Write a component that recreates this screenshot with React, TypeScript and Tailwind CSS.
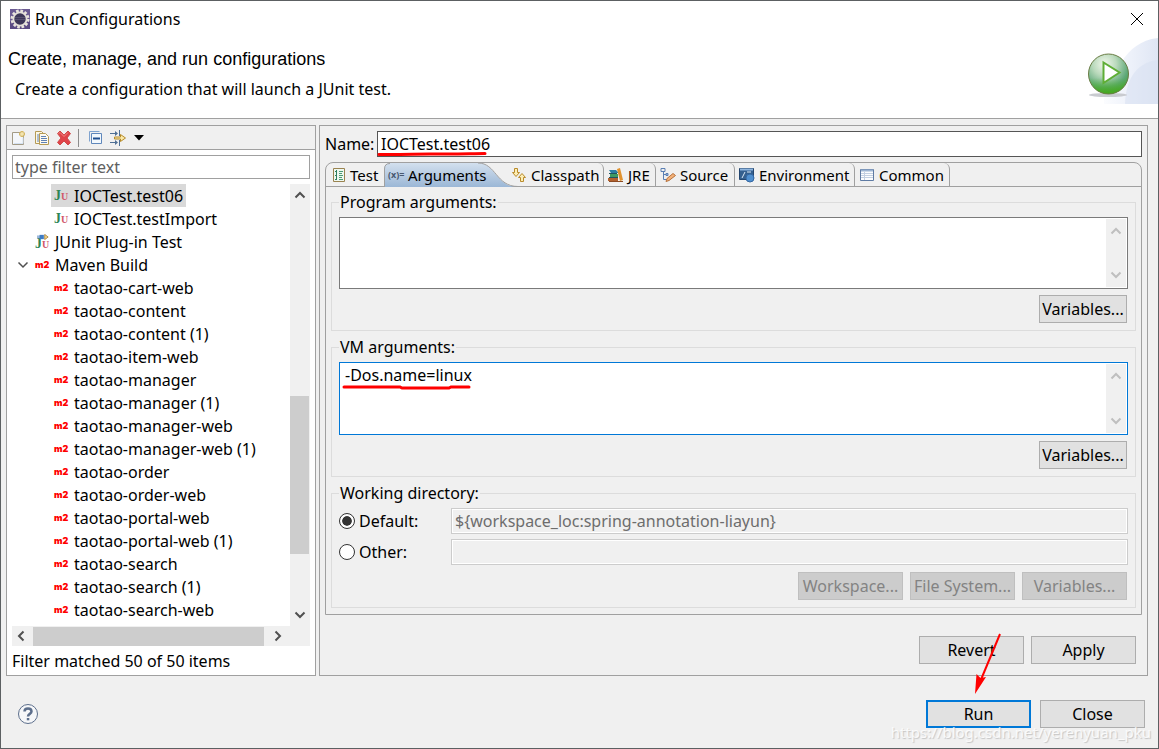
import { useState } from "react";
import type { ReactNode } from "react";

type TreeItem = {
  label: string;
  kind: "junit" | "plugin" | "maven";
  level: 1 | 2;
  expanded?: boolean;
};

const treeItems: TreeItem[] = [
  { label: "IOCTest.test06", kind: "junit", level: 2 },
  { label: "IOCTest.testImport", kind: "junit", level: 2 },
  { label: "JUnit Plug-in Test", kind: "plugin", level: 1 },
  { label: "Maven Build", kind: "maven", level: 1, expanded: true },
  { label: "taotao-cart-web", kind: "maven", level: 2 },
  { label: "taotao-content", kind: "maven", level: 2 },
  { label: "taotao-content (1)", kind: "maven", level: 2 },
  { label: "taotao-item-web", kind: "maven", level: 2 },
  { label: "taotao-manager", kind: "maven", level: 2 },
  { label: "taotao-manager (1)", kind: "maven", level: 2 },
  { label: "taotao-manager-web", kind: "maven", level: 2 },
  { label: "taotao-manager-web (1)", kind: "maven", level: 2 },
  { label: "taotao-order", kind: "maven", level: 2 },
  { label: "taotao-order-web", kind: "maven", level: 2 },
  { label: "taotao-portal-web", kind: "maven", level: 2 },
  { label: "taotao-portal-web (1)", kind: "maven", level: 2 },
  { label: "taotao-search", kind: "maven", level: 2 },
  { label: "taotao-search (1)", kind: "maven", level: 2 },
  { label: "taotao-search-web", kind: "maven", level: 2 },
];

const buttonBaseClassName = "h-7 shrink-0 bg-[#e1e1e1] text-center whitespace-nowrap";

const buttonClassName = `${buttonBaseClassName} border border-[#adadad] disabled:border-[#bfbfbf] disabled:bg-[#cccccc] disabled:text-[#838383]`;

const fieldsetClassName = "min-w-0 border border-[#dcdcdc] px-[7px] pt-1 pb-[7px]";

const Chevron = ({ direction, className = "" }: { direction: "up" | "down" | "left" | "right"; className?: string }) => {
  const paths = {
    up: "M1.5 8.5 6 4l4.500 4.500",
    down: "M1.500 3.500 6 8l4.500-4.500",
    left: "M8.500 1.500 4 6l4.500 4.500",
    right: "M3.500 1.500 8 6l-4.500 4.500",
  };
  return (
    <svg viewBox="0 0 12 12" className={`h-3 w-3 ${className}`} fill="none" stroke="currentColor" strokeWidth="2">
      <path d={paths[direction]} />
    </svg>
  );
};

const EclipseIcon = () => (
  <svg viewBox="0 0 20 20" className="h-5 w-5">
    <rect width="20" height="20" fill="#6b5a92" />
    <rect y="12" width="20" height="8" fill="#5b4a83" />
    <circle cx="10" cy="10" r="8" fill="none" stroke="#e9e4dd" strokeWidth="3" strokeDasharray="2.6 1.600" />
    <circle cx="10" cy="10" r="6.600" fill="#3d3658" stroke="#e4dfd8" strokeWidth="1.800" />
    <path d="M5 8.500h10M5 10.500h10" stroke="#57506f" />
  </svg>
);

const BannerArt = () => (
  <svg viewBox="0 0 74 68" className="h-[68px] w-[74px]">
    <defs>
      <linearGradient id="banner-wave" x1="0" x2="1">
        <stop offset="0" stopColor="#fbfcfe" />
        <stop offset="0.500" stopColor="#edf1fa" />
        <stop offset="1" stopColor="#dfe6f4" />
      </linearGradient>
      <radialGradient id="run-ball" cx="0.400" cy="0.250" r="0.850">
        <stop offset="0" stopColor="#f2f7ec" />
        <stop offset="0.350" stopColor="#b9d9bb" />
        <stop offset="0.700" stopColor="#5fa97a" />
        <stop offset="1" stopColor="#3a9a2d" />
      </radialGradient>
      <linearGradient id="run-glow" x1="0" x2="0" y1="0" y2="1">
        <stop offset="0.600" stopColor="#4fb32a" stopOpacity="0" />
        <stop offset="1" stopColor="#45a81c" />
      </linearGradient>
    </defs>
    <path d="M20 67V48C34 40 38 5 74 1v66z" fill="url(#banner-wave)" />
    <path d="M41 67C42 40 54 25 74 23v44z" fill="#d9e1f2" opacity="0.600" />
    <ellipse cx="24" cy="58" rx="19" ry="2" fill="#c9cbd0" />
    <circle cx="24.500" cy="37" r="20" fill="url(#run-ball)" />
    <circle cx="24.500" cy="37" r="20" fill="url(#run-glow)" stroke="#6b7d45" />
    <path d="M19.500 25.500v20.500l16-10.500z" fill="#fff" stroke="#5fae36" strokeWidth="2" />
  </svg>
);

const JunitIcon = () => (
  <span className="flex w-[14px] shrink-0 items-baseline font-['Liberation_Serif',serif] leading-none font-bold">
    <span className="text-[14px] text-[#2e8555]">J</span>
    <span className="text-[10px] text-[#d0566a]">U</span>
  </span>
);

const PluginIcon = () => (
  <span className="relative flex h-4 w-[14px] shrink-0 items-baseline pt-[3px] font-['Liberation_Serif',serif] leading-none font-bold">
    <svg viewBox="0 0 14 7" className="absolute top-0 left-[2px] h-[6px] w-3">
      <path d="M0 2.500h4M0 4.500h4" stroke="#4b7fc0" />
      <path d="M3 1h5v5H3z" fill="#3f7cc4" />
      <path d="M9 0.500 13 3.500 9 6.500z" fill="#f3d98b" stroke="#a8823a" />
    </svg>
    <span className="text-[14px] text-[#2e8555]">J</span>
    <span className="text-[10px] text-[#d0566a]">U</span>
  </span>
);

const MavenIcon = () => (
  <span className="w-[14px] shrink-0 font-['Inter',sans-serif] text-[9px] leading-none font-black text-[#ff0000]">
    m2
  </span>
);

const kindIcons: Record<TreeItem["kind"], ReactNode> = {
  junit: <JunitIcon />,
  plugin: <PluginIcon />,
  maven: <MavenIcon />,
};

const NewIcon = () => (
  <svg viewBox="0 0 16 16" className="h-4 w-4" fill="none">
    <path d="M1.500 2.500h8l3 3v9h-11z" fill="#f4f7fb" stroke="#a39b86" />
    <path d="M3 13.500h9v-6" stroke="#d5e2f2" />
    <path d="M11 1v6M8 4h6" stroke="#d5b867" strokeWidth="3" />
    <path d="M11 2v4M9 4h4" stroke="#fdf3c8" />
  </svg>
);

const DuplicateIcon = () => (
  <svg viewBox="0 0 16 16" className="h-4 w-4" fill="none">
    <path d="M1.500 1.500h6l2 2v10h-8z" fill="#fdf8e4" stroke="#b59a55" />
    <path d="M3 5h3M3 7h3M3 9h3M3 11h3" stroke="#5f82b5" />
    <path d="M5.500 3.500h6l3 3v8h-9z" fill="#fdfaf0" stroke="#b59a55" />
    <path d="M7 6.500h5M7 8.500h6M7 10.500h6M7 12.500h6" stroke="#5f82b5" />
  </svg>
);

const DeleteIcon = () => (
  <svg viewBox="0 0 16 16" className="h-4 w-4">
    <path
      d="M1.500 3.500 4 1l4 4 4-4 2.500 2.500L11 8l3.500 4.500L12 15l-4-4-4 4-2.500-2.500L5 8z"
      fill="#e0444a"
      stroke="#cf4a4a"
      strokeLinejoin="round"
    />
    <path d="M2.500 3.500 4 2.500l4 4 4-4" fill="none" stroke="#f08a86" />
  </svg>
);

const CollapseIcon = () => (
  <svg viewBox="0 0 16 16" className="h-4 w-4" fill="none">
    <path d="M1.500 11.500v-10h10" stroke="#7fa3cf" />
    <path d="M3.500 3.500h10v10h-10z" fill="#f2f8fd" stroke="#5f87bb" />
    <path d="M5 8.500h7" stroke="#1f4f8f" strokeWidth="2" />
  </svg>
);

const FilterIcon = () => (
  <svg viewBox="0 0 18 16" className="h-4 w-[18px]" fill="none">
    <path d="M0 3.500h7M0 12.500h7M9.500 0v6M9.500 10v6" stroke="#4f6f95" />
    <path d="M5 1v5l3-2.500zM5 10v5l3-2.500z" fill="#4f6f95" />
    <path d="M4.500 7h6V4.500L15.500 8l-5 3.500V9h-6z" fill="#fbe9a8" stroke="#b58a2a" />
  </svg>
);

const TestIcon = () => (
  <svg viewBox="0 0 14 16" className="h-4 w-[14px]" fill="none">
    <path d="M1.500 1.500h11v13h-11z" fill="#eef8f0" stroke="#9a8350" />
    <path d="M4.500 3v10M3 4.500h2M3 8.500h2M3 12.500h2" stroke="#2f7f5f" />
    <path d="M7 4.500h4M7 6.500h3M7 8.500h4M7 10.500h3M7 12.500h4" stroke="#4a9a74" />
  </svg>
);

const ArgumentsIcon = () => (
  <span className="block w-4 text-[9px] leading-none font-bold whitespace-nowrap text-[#47586f]">(x)=</span>
);

const ClasspathIcon = () => (
  <svg viewBox="0 0 16 16" className="h-4 w-4" fill="#fdeeb5" stroke="#b98b2c">
    <path d="M3.500 1.500h3v4h2l-3.500 4-3.500-4h2z" />
    <path d="m11 6.500 3.500 4h-2v4h-3v-4h-2z" />
  </svg>
);

const JreIcon = () => (
  <svg viewBox="0 0 16 16" className="h-4 w-4">
    <path d="M1 3h7l2 2v1H3z" fill="#2e7fa5" />
    <path d="M2 7h8v3H2z" fill="#3f9a63" />
    <path d="M0 11h10v3H0z" fill="#b2622f" />
    <path d="M1 6.500h8M1 10.500h9" stroke="#1f5560" />
    <path d="m9 2 3-1 3 12-3 1z" fill="#e0922e" />
    <path d="M1 14.500h14" stroke="#8c4a22" />
  </svg>
);

const SourceIcon = () => (
  <svg viewBox="0 0 16 16" className="h-4 w-4" fill="none">
    <path d="M1 1.500h4v3H1zM3.500 5v7.500H7M3.500 7.500H6" stroke="#5b7fb3" />
    <path d="M6 6.500h2v2H6z" fill="#9fb8da" stroke="#5b7fb3" />
    <path d="m6 14.500 1-3 6-5 2.500 2-6.500 5z" fill="#f3b27a" stroke="#b8713a" />
  </svg>
);

const EnvironmentIcon = () => (
  <svg viewBox="0 0 16 16" className="h-4 w-4">
    <path d="M0.500 1.500h14v11H0.500z" fill="#35608f" stroke="#24466f" />
    <path d="M1 2.500h13" stroke="#8fb5de" strokeWidth="2" />
    <path d="m3 11 3-6M8 5h4" stroke="#dce9f6" />
    <circle cx="11" cy="11" r="4" fill="#4f8fcf" stroke="#3467a2" />
  </svg>
);

const CommonIcon = () => (
  <svg viewBox="0 0 16 16" className="h-4 w-4" fill="none">
    <path d="M1.500 2.500h13v11h-13z" fill="#fbfdff" stroke="#5f7ba3" />
    <path d="M2 3.500h12" stroke="#9db5d3" strokeWidth="2" />
    <path d="M5.500 5v8M2 6.500h12M2 8.500h12M2 10.500h12" stroke="#c3d0e2" />
  </svg>
);

const HelpIcon = () => (
  <svg viewBox="0 0 22 22" className="h-[22px] w-[22px]" fill="none">
    <circle cx="11" cy="11" r="9.500" fill="#f6f7f9" stroke="#5d6f8c" />
    <path d="M7.500 8.500c0-4 7-4 7 0 0 2.500-3.500 2.300-3.500 5" stroke="#5d6f8c" strokeWidth="2.500" />
    <path d="M9.800 15h2.500v2.300H9.800z" fill="#5d6f8c" />
  </svg>
);

const tabs = [
  { label: "Test", icon: <TestIcon />, className: "w-[58px] pl-1.5 gap-1" },
  { label: "Arguments", icon: <ArgumentsIcon />, className: "w-[122px] pl-1 gap-1" },
  { label: "Classpath", icon: <ClasspathIcon />, className: "w-[98px] border-r pl-[5px] gap-1 rounded-tr-md" },
  { label: "JRE", icon: <JreIcon />, className: "w-[52px] border-r pl-1 gap-1 rounded-tr-md" },
  { label: "Source", icon: <SourceIcon />, className: "w-[79px] border-r pl-1 gap-1 rounded-tr-md" },
  { label: "Environment", icon: <EnvironmentIcon />, className: "w-[120px] border-r pl-1 gap-1 rounded-tr-md" },
  { label: "Common", icon: <CommonIcon />, className: "w-[95px] border-r pl-1 gap-1 rounded-tr-md" },
];

const ActiveTabShape = () => (
  <svg viewBox="0 0 134 24" className="absolute top-0 left-0 h-6 w-[134px]">
    <defs>
      <linearGradient id="active-tab" x1="0" x2="0" y1="0" y2="1">
        <stop offset="0" stopColor="#d3e0ee" />
        <stop offset="1" stopColor="#9bb7d6" />
      </linearGradient>
    </defs>
    <path d="M0 24V6Q0 0 6 0H94C112 0 112 24 134 24z" fill="url(#active-tab)" />
    <path d="M0.500 24V6Q0.500 0.500 6 0.500M94 0C112 0 112 23.500 134 23.500" fill="none" stroke="#a0a0a0" />
  </svg>
);

const ArgumentsBox = ({
  title,
  defaultValue,
  focused = false,
  children,
}: {
  title: string;
  defaultValue?: string;
  focused?: boolean;
  children?: ReactNode;
}) => (
  <fieldset className={fieldsetClassName}>
    <legend className="px-px leading-[22px]">{title}</legend>
    <div
      className={`relative flex border border-solid bg-white p-px ${focused ? "h-[73px] border-[#0078d7]" : "h-[72px] border-[#7a7a7a]"}`}
    >
      <textarea
        aria-label={title}
        defaultValue={defaultValue}
        spellCheck={false}
        className="min-w-0 flex-1 resize-none overflow-hidden px-1 leading-[22px] outline-none"
      />
      <div className="flex w-5 flex-col items-center justify-between bg-[#f0f0f0] py-[6px] text-[#bfbfbf]">
        <Chevron direction="up" />
        <Chevron direction="down" />
      </div>
      {children}
    </div>
    <div className="mt-[6px] flex justify-end pr-px">
      <button type="button" className={`${buttonClassName} w-[88px]`}>
        Variables...
      </button>
    </div>
  </fieldset>
);

const ConfigurationTree = () => {
  const [selected, setSelected] = useState("IOCTest.test06");

  return (
    <section className="flex w-[310px] shrink-0 flex-col border border-[#a0a0a0] bg-white">
      <div className="flex h-6 items-center border-b border-[#a0a0a0] bg-[#f0f0f0] pl-1">
        <button type="button" aria-label="New launch configuration" className="mr-[7px]">
          <NewIcon />
        </button>
        <button type="button" aria-label="Duplicate" className="mr-[6px]">
          <DuplicateIcon />
        </button>
        <button type="button" aria-label="Delete" className="mr-[6px]">
          <DeleteIcon />
        </button>
        <span className="mr-[9px] h-[18px] w-px bg-[#8c8c8c]" />
        <button type="button" aria-label="Collapse all" className="mr-[6px]">
          <CollapseIcon />
        </button>
        <button type="button" aria-label="Filter" className="mr-[6px]">
          <FilterIcon />
        </button>
        <button type="button" aria-label="Filter menu">
          <svg viewBox="0 0 10 6" className="h-[6px] w-[10px]">
            <path d="M0 0h10L5 5.500z" />
          </svg>
        </button>
      </div>

      <div className="flex flex-1 flex-col px-[5px] pt-[5px]">
        <input
          type="text"
          aria-label="Filter"
          placeholder="type filter text"
          className="h-6 w-full border border-[#a0a0a0] px-[2px] outline-none placeholder:text-[#606060] placeholder:opacity-100"
        />
        <div className="mt-[5px] flex h-[442px]">
          <ul className="min-w-0 flex-1 overflow-hidden">
            {treeItems.map(item => (
              <li key={item.label} className={`flex h-[23px] items-center ${item.level === 1 ? "pl-[5px]" : "pl-[39px]"}`}>
                {item.level === 1 ? (
                  <span className="mr-[3px] flex w-3 justify-center text-[#505050]">
                    {item.expanded ? <Chevron direction="down" className="stroke-[1.500px]" /> : null}
                  </span>
                ) : null}
                <button
                  type="button"
                  onClick={() => setSelected(item.label)}
                  className={`flex h-[23px] items-center gap-[6px] px-[3px] whitespace-nowrap ${selected === item.label ? "bg-[#d9d9d9]" : ""}`}
                >
                  {kindIcons[item.kind]}
                  <span>{item.label}</span>
                </button>
              </li>
            ))}
          </ul>
          <div className="flex w-5 flex-col items-center bg-[#f0f0f0] py-[5px] text-[#505050]">
            <Chevron direction="up" />
            <span className="mt-[195px] h-[158px] w-[19px] self-start bg-[#cdcdcd]" />
            <Chevron direction="down" className="mt-auto" />
          </div>
        </div>
        <div className="flex h-5 items-center bg-[#f0f0f0] pr-[26px] pl-[3px] text-[#505050]">
          <Chevron direction="left" />
          <span className="ml-[6px] h-[19px] w-[231px] bg-[#cdcdcd]" />
          <Chevron direction="right" className="ml-2" />
        </div>
        <p className="mt-1 leading-[23px]">Filter matched 50 of 50 items</p>
      </div>
    </section>
  );
};

const ConfigurationEditor = () => (
  <section className="flex min-w-0 flex-1 flex-col border border-[#a0a0a0] p-[5px] pb-[11px]">
    <div className="flex items-center">
      <label htmlFor="config-name" className="w-[52px] shrink-0">
        Name:
      </label>
      <div className="relative min-w-0 flex-1">
        <input
          id="config-name"
          type="text"
          defaultValue="IOCTest.test06"
          spellCheck={false}
          className="block h-[26px] w-full border border-[#555555] bg-white px-[3px] outline-none"
        />
        <svg viewBox="0 0 112 6" className="absolute top-[20px] left-0 h-[6px] w-28" fill="none">
          <path d="M2 3.500C30 4 40 2.500 60 3S95 2.500 108 2.500" stroke="#f00" strokeWidth="3" strokeLinecap="round" />
        </svg>
      </div>
    </div>

    <div className="mt-[5px] flex flex-1 flex-col rounded-t-lg border border-[#a0a0a0]">
      <div role="tablist" className="flex h-6 border-b border-[#a0a0a0] text-[15px]">
        {tabs.map(tab => {
          const active = tab.label === "Arguments";
          return (
            <button
              key={tab.label}
              type="button"
              role="tab"
              aria-selected={active}
              className={`relative flex shrink-0 items-center border-[#a0a0a0] whitespace-nowrap ${tab.className}`}
            >
              {active ? <ActiveTabShape /> : null}
              <span className="relative shrink-0">{tab.icon}</span>
              <span className="relative">{tab.label}</span>
            </button>
          );
        })}
      </div>

      <div className="flex flex-col gap-[5px] px-[5px] pt-1 pb-[6px]">
        <ArgumentsBox title="Program arguments:" />
        <ArgumentsBox title="VM arguments:" defaultValue="-Dos.name=linux" focused>
          <svg viewBox="0 0 130 8" className="absolute top-[20px] left-px h-2 w-[130px]" fill="none">
            <path d="M3 4h56l2 1h47l2-1h18" stroke="#f00" strokeWidth="3" strokeLinecap="round" />
          </svg>
        </ArgumentsBox>

        <fieldset className={fieldsetClassName}>
          <legend className="px-px leading-[22px]">Working directory:</legend>
          <div className="grid grid-cols-[112px_1fr] items-center gap-y-[5px]">
            <label className="flex items-center gap-1">
              <input
                type="radio"
                name="working-directory"
                defaultChecked
                className="h-4 w-4 appearance-none rounded-full border border-[#333333] bg-white bg-clip-content p-[2px] checked:bg-[#333333] checked:shadow-[inset_0_0_0_2px_white]"
              />
              Default:
            </label>
            <input
              type="text"
              aria-label="Default working directory"
              defaultValue="${workspace_loc:spring-annotation-liayun}"
              disabled
              className="h-[26px] min-w-0 border border-[#cccccc] bg-[#f0f0f0] px-[3px] text-[#6d6d6d] shadow-[inset_0_0_0_1px_white]"
            />
            <label className="flex items-center gap-1">
              <input
                type="radio"
                name="working-directory"
                className="h-4 w-4 appearance-none rounded-full border border-[#333333] bg-white"
              />
              Other:
            </label>
            <input
              type="text"
              aria-label="Other working directory"
              disabled
              className="h-[26px] min-w-0 border border-[#cccccc] bg-[#f0f0f0] px-[3px] shadow-[inset_0_0_0_1px_white]"
            />
          </div>
          <div className="mt-[7px] flex justify-end gap-[7px] pr-px">
            {["Workspace...", "File System...", "Variables..."].map(label => (
              <button key={label} type="button" disabled className={`${buttonClassName} w-[105px]`}>
                {label}
              </button>
            ))}
          </div>
        </fieldset>
      </div>
    </div>

    <div className="mt-[21px] flex justify-end gap-[7px] pr-[6px]">
      <button type="button" className={`${buttonClassName} w-[105px]`}>
        Revert
      </button>
      <button type="button" className={`${buttonClassName} w-[105px]`}>
        Apply
      </button>
    </div>
  </section>
);

export default function App() {
  return (
    <div className="relative flex min-h-screen flex-col overflow-hidden border border-[#5c6062] bg-[#f0f0f0] font-['Noto_Sans',sans-serif] text-[16px] leading-[22px] text-black">
      <header className="flex justify-between border-b border-[#a0a0a0] bg-white">
        <div className="pb-[18px]">
          <div className="flex h-9 items-center gap-[5px] pl-[9px]">
            <EclipseIcon />
            <span>Run Configurations</span>
          </div>
          <h1 className="mt-[11px] pl-[7px] font-['Liberation_Sans',sans-serif] text-[18px]">
            Create, manage, and run configurations
          </h1>
          <p className="mt-2 pl-[14px]">Create a configuration that will launch a JUnit test.</p>
        </div>
        <div className="flex flex-col items-end">
          <button type="button" aria-label="Close window" className="mr-[14px] flex h-9 w-[14px] items-center">
            <svg viewBox="0 0 14 14" className="h-[14px] w-[14px]" fill="none" stroke="#000">
              <path d="m1 1 12 12M13 1 1 13" />
            </svg>
          </button>
          <BannerArt />
        </div>
      </header>

      <main className="flex gap-[3px] pt-[6px] pr-[10px] pl-[5px]">
        <ConfigurationTree />
        <ConfigurationEditor />
      </main>

      <footer className="mt-6 flex items-center justify-between pr-[13px] pl-4">
        <button type="button" aria-label="Help">
          <HelpIcon />
        </button>
        <div className="relative flex gap-[9px]">
          <button type="button" className={`${buttonBaseClassName} w-[105px] border-2 border-[#0078d7]`}>
            Run
          </button>
          <button type="button" className={`${buttonClassName} w-[105px]`}>
            Close
          </button>
          <svg viewBox="0 0 32 64" className="pointer-events-none absolute -top-[68px] left-[46px] h-16 w-8">
            <path d="M28 2 8 50" stroke="#f00" strokeWidth="2" />
            <path d="M3 62 4.500 42l4 4 5.500-1z" fill="#f00" />
          </svg>
        </div>
      </footer>

      <span className="pointer-events-none absolute right-[7px] bottom-[5px] text-[15px] text-white/80 [text-shadow:1px_1px_1px_#c4c4c4]">
        https://blog.csdn.net/yerenyuan_pku
      </span>
    </div>
  );
}
